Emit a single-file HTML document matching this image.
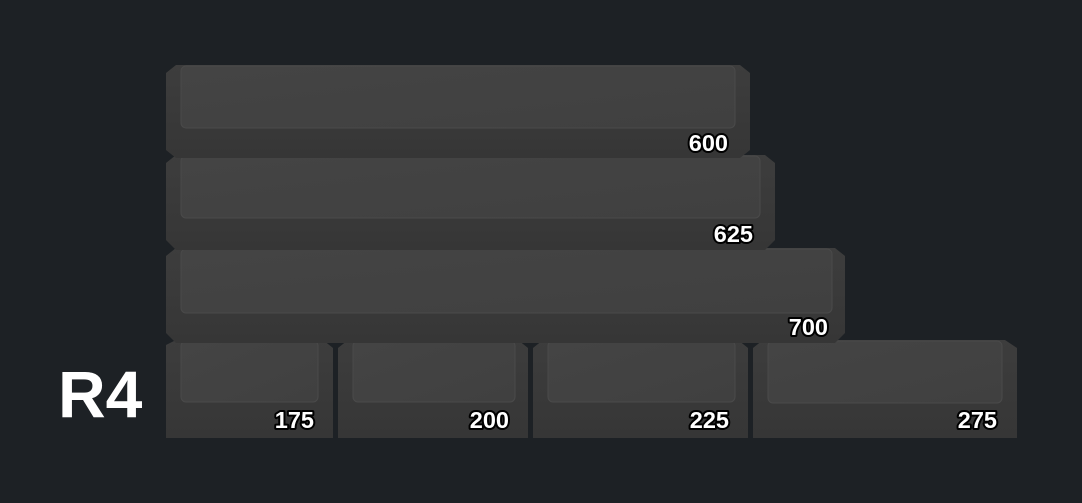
<!DOCTYPE html>
<html><head><style>
html,body{margin:0;padding:0;background:#1d2125;width:1082px;height:503px;overflow:hidden}
svg{display:block}
.l{font-family:"Liberation Sans",sans-serif;font-weight:bold;font-size:23.5px;fill:#fff;stroke:#000;stroke-width:4px;paint-order:stroke;stroke-linejoin:round}
</style></head><body>
<svg width="1082" height="503" viewBox="0 0 1082 503">
<defs>
<linearGradient id="f" x1="0" y1="0" x2="0" y2="1"><stop offset="0" stop-color="#3d3d3d"/><stop offset="1" stop-color="#363636"/></linearGradient>
<linearGradient id="t" x1="0" y1="0" x2="1" y2="1"><stop offset="0" stop-color="#444"/><stop offset="1" stop-color="#404040"/></linearGradient>
</defs>
<rect width="1082" height="503" fill="#1d2125"/>
<text x="58" y="417" font-family="Liberation Sans,sans-serif" font-weight="bold" font-size="66" fill="#fff">R4</text>
<polygon points="166,345 176,340 323,340 333,348 333,438 166,438" fill="url(#f)"/>
<rect x="181" y="341" width="137" height="61" rx="5" fill="url(#t)" stroke="#4a4a4a"/>
<polygon points="338,348 348,340 518,340 528,348 528,438 338,438" fill="url(#f)"/>
<rect x="353" y="341" width="162" height="61" rx="5" fill="url(#t)" stroke="#4a4a4a"/>
<polygon points="533,348 543,340 738,340 748,348 748,438 533,438" fill="url(#f)"/>
<rect x="548" y="341" width="187" height="61" rx="5" fill="url(#t)" stroke="#4a4a4a"/>
<polygon points="753,348 763,340 1005,340 1017,348 1017,438 753,438" fill="url(#f)"/>
<rect x="768" y="341" width="234" height="62" rx="5" fill="url(#t)" stroke="#4a4a4a"/>
<polygon points="166,256 176,248 835,248 845,256 845,333 835,343 176,343 166,333" fill="url(#f)"/>
<rect x="181" y="249" width="651" height="64" rx="5" fill="url(#t)" stroke="#4a4a4a"/>
<polygon points="166,163 176,155 765,155 775,163 775,240 765,250 176,250 166,240" fill="url(#f)"/>
<rect x="181" y="156" width="579" height="62" rx="5" fill="url(#t)" stroke="#4a4a4a"/>
<polygon points="166,73 176,65 740,65 750,73 750,150 740,158 176,158 166,150" fill="url(#f)"/>
<rect x="181" y="66" width="554" height="62" rx="5" fill="url(#t)" stroke="#4a4a4a"/>
<text class="l" x="728" y="151" text-anchor="end">600</text>
<text class="l" x="753" y="242" text-anchor="end">625</text>
<text class="l" x="828" y="335" text-anchor="end">700</text>
<text class="l" x="314" y="428" text-anchor="end">175</text>
<text class="l" x="509" y="428" text-anchor="end">200</text>
<text class="l" x="729" y="428" text-anchor="end">225</text>
<text class="l" x="997" y="428" text-anchor="end">275</text>
</svg>
</body></html>
